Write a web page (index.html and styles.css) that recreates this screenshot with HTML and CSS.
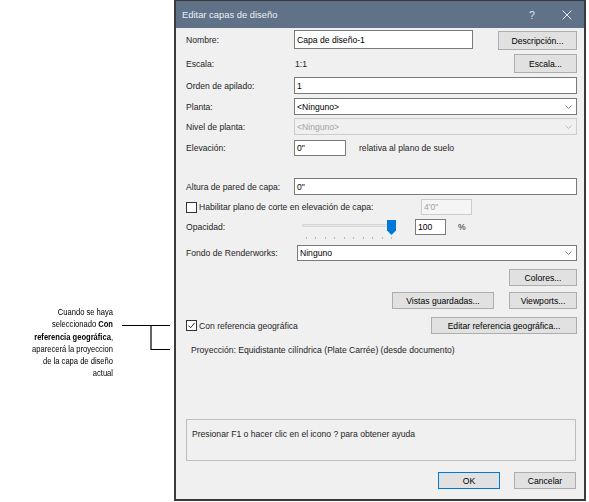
FILE: index.html
```html
<!DOCTYPE html>
<html lang="es">
<head>
<meta charset="utf-8">
<title>Editar capas de diseño</title>
<link rel="stylesheet" href="styles.css">
</head>
<body>
<div class="page">
  <div class="annot">
    <div class="callout">
      <p class="callout-text">Cuando se haya<br>seleccionado <b>Con</b><br><b>referencia geográfica</b>,<br>aparecerá la proyeccion<br>de la capa de diseño<br>actual</p>
      <svg class="leader" width="54" height="32" viewBox="0 0 54 32">
        <path d="M2 4.5 H50 M31 4.5 V28.5 H50" fill="none" stroke="#000" stroke-width="1.2"/>
      </svg>
    </div>
  </div>

  <div class="dialog">
    <div class="titlebar">
      <span class="title">Editar capas de diseño</span>
      <span class="t-help">?</span>
      <svg class="t-close" width="10" height="10" viewBox="0 0 10 10">
        <path d="M0.5 0.5 L9.5 9.5 M9.5 0.5 L0.5 9.5" stroke="#e4e9ef" stroke-width="1"/>
      </svg>
    </div>

    <div class="content">
      <div class="row r1">
        <span class="lbl">Nombre:</span>
        <div class="field f-name">Capa de diseño-1</div>
        <div class="btn b-desc">Descripción...</div>
      </div>

      <div class="row r2">
        <span class="lbl">Escala:</span>
        <span class="val">1:1</span>
        <div class="btn b-escala">Escala...</div>
      </div>

      <div class="row r3">
        <span class="lbl">Orden de apilado:</span>
        <div class="field grow">1</div>
      </div>

      <div class="row r4">
        <span class="lbl">Planta:</span>
        <div class="field select grow"><span>&lt;Ninguno&gt;</span>
          <svg class="chev" width="7" height="4" viewBox="0 0 7 4"><path d="M0.5 0.5 L3.5 3.5 L6.5 0.5" fill="none" stroke="#707070" stroke-width="0.9"/></svg>
        </div>
      </div>

      <div class="row r5">
        <span class="lbl">Nivel de planta:</span>
        <div class="field select disabled grow"><span>&lt;Ninguno&gt;</span>
          <svg class="chev" width="7" height="4" viewBox="0 0 7 4"><path d="M0.5 0.5 L3.5 3.5 L6.5 0.5" fill="none" stroke="#b4b4b4" stroke-width="0.9"/></svg>
        </div>
      </div>

      <div class="row r6">
        <span class="lbl">Elevación:</span>
        <div class="field f-elev">0"</div>
        <span class="note">relativa al plano de suelo</span>
      </div>

      <div class="row r7">
        <span class="lbl">Altura de pared de capa:</span>
        <div class="field grow">0"</div>
      </div>

      <div class="row r8">
        <div class="check-group w-cut">
          <span class="check"></span>
          <span class="check-lbl">Habilitar plano de corte en elevación de capa:</span>
        </div>
        <div class="field disabled f-cut">4'0"</div>
      </div>

      <div class="row r9">
        <span class="lbl lbl-op">Opacidad:</span>
        <div class="slider">
          <div class="track"></div>
          <svg class="thumb" width="9" height="15" viewBox="0 0 9 15"><path d="M0 0 H9 V10.5 L4.5 15 L0 10.5 Z" fill="#0078d7"/></svg>
          <div class="ticks"><i></i><i></i><i></i><i></i><i></i><i></i><i></i><i></i><i></i><i></i></div>
        </div>
        <div class="field f-op">100</div>
        <span class="pct">%</span>
      </div>

      <div class="row r10">
        <span class="lbl lbl-rw">Fondo de Renderworks:</span>
        <div class="field select grow"><span>Ninguno</span>
          <svg class="chev" width="7" height="4" viewBox="0 0 7 4"><path d="M0.5 0.5 L3.5 3.5 L6.5 0.5" fill="none" stroke="#707070" stroke-width="0.9"/></svg>
        </div>
      </div>

      <div class="row r11 right">
        <div class="btn b-small">Colores...</div>
      </div>

      <div class="row r12 right">
        <div class="btn b-vistas">Vistas guardadas...</div>
        <div class="btn b-small">Viewports...</div>
      </div>

      <div class="row r13">
        <div class="check-group">
          <span class="check checked">
            <svg width="9" height="9" viewBox="0 0 9 9"><path d="M1.5 4.5 L3.6 6.8 L7.6 1.8" fill="none" stroke="#333" stroke-width="1"/></svg>
          </span>
          <span class="check-lbl">Con referencia geográfica</span>
        </div>
        <div class="btn b-geo">Editar referencia geográfica...</div>
      </div>

      <div class="row r14">
        <span class="proj">Proyección: Equidistante cilíndrica (Plate Carrée) (desde documento)</span>
      </div>

      <div class="helpbox">Presionar F1 o hacer clic en el icono ? para obtener ayuda</div>

      <div class="row r16 right">
        <div class="btn b-ok">OK</div>
        <div class="btn b-cancel">Cancelar</div>
      </div>
    </div>
  </div>
</div>
</body>
</html>
```

FILE: styles.css
```css
* { box-sizing: border-box; }

html, body {
  margin: 0;
  padding: 0;
  background: #ffffff;
}

body {
  font-family: "Liberation Sans", Arial, sans-serif;
  font-size: 8.6px;
  color: #1e1e1e;
}

.page {
  display: flex;
  align-items: flex-start;
  width: 589px;
  height: 502px;
  overflow: hidden;
}

/* ---------- annotation ---------- */
.annot {
  width: 174px;
  flex: none;
}

.callout {
  display: flex;
  align-items: flex-start;
  margin-top: 306px;
}

.callout-text {
  margin: 0;
  width: 113px;
  flex: none;
  text-align: right;
  white-space: nowrap;
  font-family: "Liberation Sans", Arial, sans-serif;
  font-size: 9.6px;
  line-height: 12.25px;
  color: #000;
  transform: scaleX(0.79);
  transform-origin: 100% 50%;
  filter: grayscale(1);
}

.callout-text b { font-weight: bold; }

.leader {
  display: block;
  margin-top: 15px;
  margin-left: 7px;
}

/* ---------- dialog ---------- */
.dialog {
  width: 412px;
  height: 501px;
  flex: none;
  background: #f0f0f0;
  border: 2px solid #3a3a3a;
  border-top: 1px solid #3a3a3a;
  display: flex;
  flex-direction: column;
}

.titlebar {
  height: 27px;
  flex: none;
  background: #5f7288;
  display: flex;
  align-items: center;
  padding-left: 6px;
  color: #eef1f5;
  font-size: 9.4px;
}

.title { flex: 1; }

.t-help {
  width: 10px;
  text-align: center;
  font-size: 10.5px;
  color: #dfe5ec;
  margin-right: 25px;
}

.t-close {
  display: block;
  margin-right: 12px;
}

.content {
  display: flex;
  flex-direction: column;
  padding: 0 7px 0 10px;
}

.row {
  display: flex;
  align-items: center;
}

.row.right { justify-content: flex-end; }

.r1  { margin-top: 2px;  height: 20px; }
.r2  { margin-top: 4px;  height: 19px; }
.r3  { margin-top: 4px;  height: 17px; }
.r4  { margin-top: 4px;  height: 17px; }
.r5  { margin-top: 3px;  height: 17px; }
.r6  { margin-top: 5px;  height: 16px; }
.r7  { margin-top: 22px; height: 17px; }
.r8  { margin-top: 4px;  height: 16px; }
.r9  { margin-top: 4px;  height: 16px; }
.r10 { margin-top: 10px; height: 16px; }
.r11 { margin-top: 8px;  height: 17px; }
.r12 { margin-top: 6px;  height: 17px; }
.r13 { margin-top: 8px;  height: 17px; }
.r14 { margin-top: 10px; height: 12px; }
.r16 { margin-top: 11px; height: 17px; }

.lbl {
  width: 108px;
  flex: none;
}

.lbl-op { width: 116px; }
.lbl-rw { width: 111px; }

.val { padding-left: 1px; }

.field {
  height: 100%;
  background: #ffffff;
  border: 1px solid #7a7a7a;
  padding-left: 2px;
  display: flex;
  align-items: center;
  color: #000;
  white-space: nowrap;
}

.field.grow { flex: 1; }

.field.select { justify-content: space-between; }

.field.disabled {
  background: #f5f5f5;
  border-color: #cccccc;
  color: #a3a3a3;
}

.select.disabled { background: #f0f0f0; }

.chev {
  display: block;
  margin-right: 4px;
}

.f-name {
  width: 179px;
  height: 19px;
  align-self: flex-start;
}

.f-elev { width: 52px; }

.note { margin-left: 13px; }

.f-cut { width: 51px; }

.f-op { width: 31px; margin-left: 19px; }

.pct { margin-left: 12px; }

.btn {
  height: 100%;
  background: #e1e1e1;
  border: 1px solid #adadad;
  display: flex;
  align-items: center;
  justify-content: center;
  color: #000;
  white-space: nowrap;
}

.b-desc {
  width: 79px;
  height: 19px;
  margin-left: auto;
  align-self: flex-end;
}

.b-escala { width: 63px; margin-left: auto; }

.b-small { width: 68px; }

.b-vistas { width: 102px; margin-right: 15px; }

.b-geo { width: 146px; margin-left: auto; }

.b-ok {
  width: 62px;
  border-color: #0078d7;
  margin-right: 14px;
}

.b-cancel { width: 62px; margin-right: 1px; }

/* checkbox */
.check-group {
  display: flex;
  align-items: center;
}

.w-cut { width: 235px; flex: none; }

.check {
  width: 11px;
  height: 11px;
  flex: none;
  background: #ffffff;
  border: 1px solid #333333;
  display: flex;
  align-items: center;
  justify-content: center;
}

.check svg { display: block; }

.check-lbl { margin-left: 2px; }

/* slider */
.slider {
  position: relative;
  width: 94px;
  height: 16px;
  flex: none;
}

.track {
  position: absolute;
  left: 0;
  top: 5px;
  width: 91px;
  height: 3px;
  background: #e7e7e7;
  border: 1px solid #d8d8d8;
}

.thumb {
  position: absolute;
  left: 85px;
  top: 1px;
  display: block;
}

.ticks {
  position: absolute;
  left: 4px;
  top: 18px;
  width: 86px;
  display: flex;
  justify-content: space-between;
}

.ticks i {
  display: block;
  width: 1px;
  height: 2px;
  background: #b9b9b9;
}

.proj { padding-left: 5px; }

.helpbox {
  margin-top: 63px;
  margin-right: 1px;
  height: 42px;
  border: 1px solid #bdbdbd;
  padding: 9px 0 0 5px;
  line-height: 11px;
}
```
